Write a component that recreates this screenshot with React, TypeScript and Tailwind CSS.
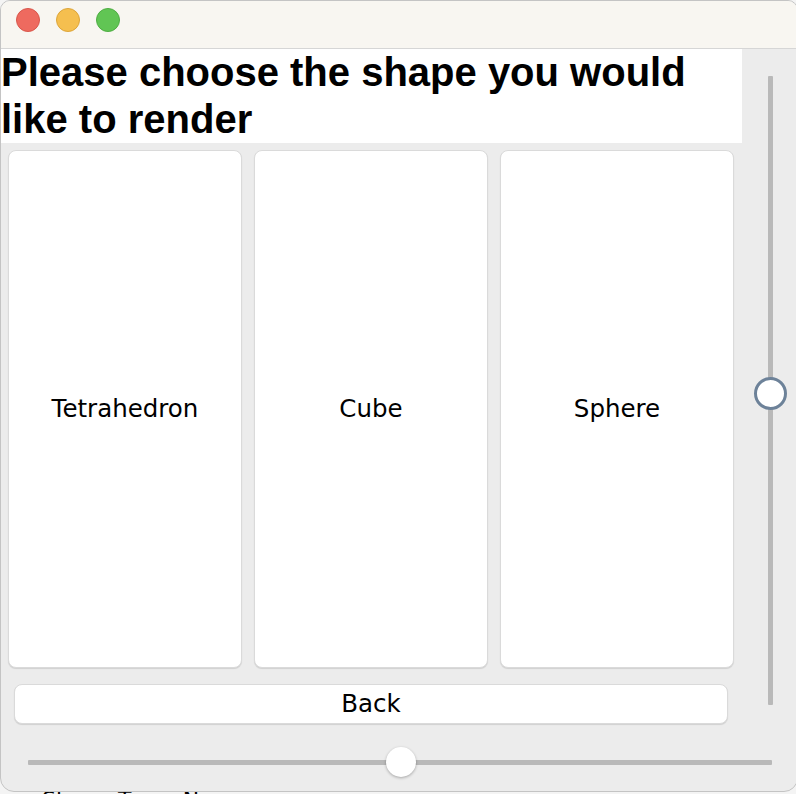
import React from "react";

const shapes = ["Tetrahedron", "Cube", "Sphere"];

export default function App() {
  return (
    <div className="w-[796px] h-[794px] overflow-hidden bg-[#f4f4f4]">
      <div className="relative z-10 h-[792px] w-[798px] rounded-t-[10px] rounded-b-[14px] overflow-hidden bg-[#ececec] border border-[#c4c4c4]">
        {/* title bar */}
        <div className="h-[48px] bg-[#f8f6f1] border-b border-[#d6d6d6] flex items-start gap-[16px] pl-[15px] pt-[7px]">
          <span className="w-[24px] h-[24px] rounded-full bg-[#ee6a5f] border border-[#d8574c]" />
          <span className="w-[24px] h-[24px] rounded-full bg-[#f5bf4f] border border-[#dca53a]" />
          <span className="w-[24px] h-[24px] rounded-full bg-[#61c554] border border-[#4fad43]" />
        </div>

        <div className="flex">
          <div className="w-[741px] flex flex-col">
            <div className="h-[94px] bg-white font-['Liberation_Sans',Arial,sans-serif] font-bold text-[40px] leading-[47px] text-black">
              Please choose the shape you would like to render
            </div>
            <div className="flex gap-[12px] pl-[7px] pt-[7px]">
              {shapes.map((s) => (
                <div
                  key={s}
                  className="w-[234px] h-[518px] bg-white rounded-[8px] border border-[#dadada] shadow-[0_1px_1px_rgba(0,0,0,0.12)] flex items-center justify-center font-['DejaVu_Sans',sans-serif] text-[24.5px] text-black"
                >
                  {s}
                </div>
              ))}
            </div>
            <div className="ml-[13px] mt-[16px] w-[714px] h-[40px] bg-white rounded-[8px] border border-[#dadada] shadow-[0_1px_1px_rgba(0,0,0,0.12)] flex items-center justify-center font-['DejaVu_Sans',sans-serif] text-[24.5px] text-black">
              Back
            </div>
          </div>

          {/* vertical slider */}
          <div className="flex-1 pt-[27px] pl-[26px]">
            <div className="relative w-[5px] h-[629px] bg-[#b9b9b9] rounded-[1px]">
              <div className="absolute left-[-14px] top-[301px] w-[33px] h-[33px] rounded-full bg-white border-[3px] border-[#6d8299]" />
            </div>
          </div>
        </div>

        {/* horizontal slider */}
        <div className="pl-[27px] pt-[36px]">
          <div className="relative w-[744px] h-[5px] bg-[#b9b9b9] rounded-[1px]">
            <div className="absolute left-[358px] top-[-13px] w-[30px] h-[30px] rounded-full bg-white shadow-[0_1px_3px_rgba(0,0,0,0.3)]" />
          </div>
        </div>
      </div>
      <div className="-mt-[3px] pl-[42px] font-['DejaVu_Sans',sans-serif] text-[22px] leading-none text-black">
        Shape Type: None
      </div>
    </div>
  );
}
